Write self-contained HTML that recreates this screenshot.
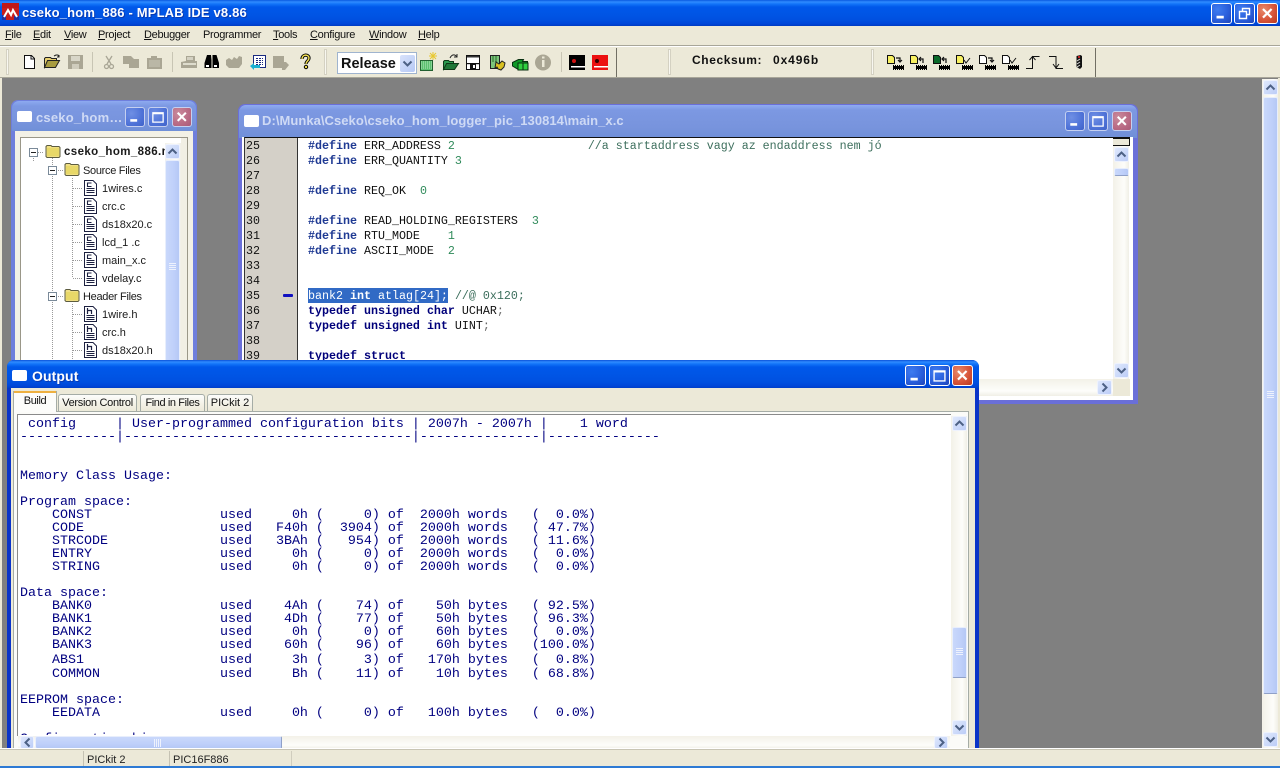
<!DOCTYPE html>
<html><head><meta charset="utf-8"><title>MPLAB IDE</title>
<style>
html,body{margin:0;padding:0;width:1280px;height:768px;overflow:hidden;background:#808080}
*{box-sizing:border-box}
div,span,pre,svg{position:absolute}
b,i,u,em{position:static}
pre span,pre b,pre i{position:static;font-style:normal}
body{font-family:"Liberation Sans",sans-serif;font-size:11px;color:#000}
.tbtn{border-radius:3px;border:1px solid #fff;width:21px;height:21px;background:radial-gradient(circle at 30% 30%,#3f7cf0 0,#2a5fdc 55%,#1f44b8 100%)}
.tbtn.x{background:radial-gradient(circle at 30% 30%,#e88a6c 0,#d8553a 55%,#b83a20 100%)}
.ib{border:1px solid #c5d0f0;background:radial-gradient(circle at 30% 30%,#6f8fe4 0,#4f73d8 60%,#3f62c8 100%);border-radius:3px;width:20px;height:20px}
.ib.x{background:radial-gradient(circle at 30% 30%,#c98a9c 0,#b96a84 60%,#a85a78 100%);}
.tit{color:#fff;font-weight:bold;white-space:nowrap}
.menu{top:29px;font-size:11px;letter-spacing:-.3px;white-space:nowrap;color:#111}
.menu u{text-decoration:underline}
.sb{width:15px;height:15px;background:linear-gradient(135deg,#dfe8fd,#bccdf7);border:1px solid #eef2fd;border-radius:2px}
.track{background:linear-gradient(90deg,#f3f1e8,#fdfdfa 70%,#f0efe6)}
.trackh{background:linear-gradient(180deg,#f3f1e8,#fdfdfa 70%,#f0efe6)}
.thumb{background:linear-gradient(90deg,#c9d8fb,#bfd0fa 60%,#b5c8f5);border:1px solid #e8eefc;border-bottom:1px solid #8fa0c8;border-radius:2px}
.thumbh{background:linear-gradient(180deg,#c9d8fb,#bfd0fa 60%,#b5c8f5);border:1px solid #e8eefc;border-right:1px solid #8fa0c8;border-radius:2px}
.tab{top:394px;height:17px;background:linear-gradient(#fdfdfb,#ece9d8);border:1px solid #a5aca6;border-bottom:0;border-radius:3px 3px 0 0;font-size:11px;text-align:center;line-height:16px;white-space:nowrap;color:#111}
.tr{font-size:11px;white-space:nowrap;color:#1a1a1a;line-height:13px}
pre{margin:0;font-family:"Liberation Mono",monospace}
.out{left:2px;font-size:13.33px;line-height:13px;color:#000080}
#ed{left:308px;top:139px;font-size:11.67px;line-height:15px;color:#111}
#ln{left:246px;top:139px;font-size:11.67px;line-height:15px;color:#111}
.d{color:#1f3a93;font-weight:bold}.n{color:#2f8a5a}.k{color:#00007a;font-weight:bold}.c{color:#3c6e5c}.p{color:#666}
.st{top:754px;font-size:11px;color:#222;white-space:nowrap}
</style></head><body>
<svg width="0" height="0" style="left:0;top:0">
<defs>
<symbol id="cu" viewBox="0 0 15 15"><path d="M3.5 9.5L7.5 5.5L11.5 9.5" fill="none" stroke="#4d6185" stroke-width="2"/></symbol>
<symbol id="cd" viewBox="0 0 15 15"><path d="M3.5 5.5L7.5 9.5L11.5 5.5" fill="none" stroke="#4d6185" stroke-width="2"/></symbol>
<symbol id="cl" viewBox="0 0 15 15"><path d="M9.5 3.5L5.5 7.5L9.5 11.5" fill="none" stroke="#4d6185" stroke-width="2"/></symbol>
<symbol id="cr" viewBox="0 0 15 15"><path d="M5.5 3.5L9.5 7.5L5.5 11.5" fill="none" stroke="#4d6185" stroke-width="2"/></symbol>
<symbol id="xx" viewBox="0 0 21 21"><path d="M5.5 5.5L15 15M15 5.5L5.5 15" stroke="#fff" stroke-width="2.4" fill="none"/></symbol>
<symbol id="mn" viewBox="0 0 21 21"><rect x="5" y="13" width="8" height="3" fill="#fff"/></symbol>
<symbol id="mx" viewBox="0 0 21 21"><path d="M4.5 5.5h12v11h-12zM4.5 6.5h12" fill="none" stroke="#fff" stroke-width="1.5"/></symbol>
<symbol id="fold" viewBox="0 0 16 15"><path d="M1 4.5V2.5l1-1h4l1 1h7l1 1v9l-1 1H2l-1-1z" fill="#f0df84" stroke="#5c5c40"/><rect x="2" y="4" width="12" height="8" fill="#e8d868"/></symbol>
<symbol id="fc" viewBox="0 0 15 16"><path d="M1.5.5H10L13.5 4V15.5H1.5z" fill="#fff" stroke="#1c2040"/><path d="M8.500 3H4.500V6.500H8.500" fill="none" stroke="#1c2040" stroke-width="1.100"/><path d="M3.500 8.500h8M3.500 10.500h8M3.500 12.500h8" stroke="#1c2040"/></symbol>
<symbol id="fh" viewBox="0 0 15 16"><path d="M1.5.5H10L13.5 4V15.5H1.5z" fill="#fff" stroke="#1c2040"/><path d="M4.500 2V8M4.500 4.500H8.500V8" fill="none" stroke="#1c2040" stroke-width="1.200"/><path d="M3.500 9.500h8M3.500 11.500h8M3.500 13.500h8" stroke="#1c2040"/></symbol>
<symbol id="chip" viewBox="0 0 11 5"><rect x="0" y="1" width="11" height="3" fill="#000"/><path d="M.5 0v5M2.5 0v5M4.5 0v5M6.5 0v5M8.5 0v5M10.5 0v5" stroke="#000" stroke-dasharray="1 3"/></symbol>
</defs></svg>

<!-- main title -->
<div style="left:0;top:0;width:1280px;height:26px;background:linear-gradient(#0a5ae0 0,#2f8bff 2px,#1274f8 4px,#0058ea 7px,#0055e5 14px,#0050e0 20px,#0046d8 24px,#003bc0 26px)"></div>
<svg style="left:2px;top:3px" width="17" height="17" viewBox="0 0 17 17"><rect width="17" height="6" fill="#c01818"/><rect y="5" width="17" height="12" fill="#c81c1c"/><rect y="12" width="4" height="5" fill="#2030a0"/><rect x="12" y="13" width="5" height="4" fill="#2030a0"/><path d="M2 14L6 7l3 5 2-5 4 7" fill="none" stroke="#fff" stroke-width="2"/></svg>
<div class="tit" style="left:22px;top:5px;font-size:13px;letter-spacing:.17px;text-shadow:1px 1px 0 #0a3ab0">cseko_hom_886 - MPLAB IDE v8.86</div>
<div class="tbtn" style="left:1211px;top:3px"><svg style="left:0;top:0" width="19" height="19"><use href="#mn"/></svg></div>
<div class="tbtn" style="left:1234px;top:3px"><svg style="left:0;top:0" width="19" height="19" viewBox="0 0 19 19"><path d="M7.5 7V4.5h7v6H12M4.5 7.5h7v7h-7z" fill="none" stroke="#fff" stroke-width="1.4"/></svg></div>
<div class="tbtn x" style="left:1257px;top:3px"><svg style="left:0;top:0" width="19" height="19"><use href="#xx"/></svg></div>

<!-- menu -->
<div style="left:0;top:26px;width:1280px;height:52px;background:#ece9d8"></div>
<div style="left:0;top:45px;width:1280px;height:1px;background:#a8a699"></div>
<div style="left:0;top:46px;width:1280px;height:1px;background:#fff"></div>
<div style="left:0;top:77px;width:1280px;height:1px;background:#a8a699"></div>
<span class="menu" style="left:5px"><u>F</u>ile</span>
<span class="menu" style="left:33px"><u>E</u>dit</span>
<span class="menu" style="left:64px"><u>V</u>iew</span>
<span class="menu" style="left:98px"><u>P</u>roject</span>
<span class="menu" style="left:144px"><u>D</u>ebugger</span>
<span class="menu" style="left:203px">Programmer</span>
<span class="menu" style="left:273px"><u>T</u>ools</span>
<span class="menu" style="left:310px"><u>C</u>onfigure</span>
<span class="menu" style="left:369px"><u>W</u>indow</span>
<span class="menu" style="left:418px"><u>H</u>elp</span>

<!-- toolbar icons -->
<svg style="left:0;top:46px" width="1280" height="32" viewBox="0 46 1280 32">
<g fill="#f8f7f0" stroke="#d4d1c2"><rect x="6.5" y="49.5" width="2" height="25"/><rect x="324.5" y="49.5" width="2" height="25"/><rect x="668.5" y="49.5" width="2" height="25"/><rect x="871.5" y="49.5" width="2" height="25"/></g>
<path d="M92.5 52v20M172.5 52v20M561.5 52v20" stroke="#c8c5b4"/>
<path d="M616.5 48v29M1095.5 48v29" stroke="#716f64"/>
<path d="M24.5 55.5h7l3 3v10h-10z" fill="#fff" stroke="#111"/><path d="M31 56v3h3" fill="none" stroke="#111"/>
<path d="M44.5 67.5v-9l1-1h5l1 1h5v2h-7l-5 7z" fill="#e8d070" stroke="#222"/><path d="M44.5 67.5l3-7h12l-4 7z" fill="#a89c40" stroke="#222"/><path d="M54 56l2-1h2l1 2M59 55v2h-2" fill="none" stroke="#222"/>
<g fill="#aaa694"><path d="M68 55h15v14H68z"/></g><rect x="71" y="56" width="9" height="5" fill="#d8d6c8"/><rect x="72" y="64" width="7" height="5" fill="#cfccbd"/>
<g fill="none" stroke="#a9a696" stroke-width="1.3"><path d="M106 56l5 8M112 56l-5 8"/><circle cx="106.5" cy="66.5" r="2"/><circle cx="111.5" cy="66.5" r="2"/></g>
<path d="M123 56h8l3 3h5v9h-10v-4h-6z" fill="#aaa694"/>
<path d="M147 58h4v-2h6v2h5v11h-15z" fill="#aaa694"/><rect x="149" y="60" width="11" height="7" fill="#bab7a6"/>
<path d="M186 56h9v5h2v7h-16v-6l5-1z" fill="#aaa694"/><rect x="183" y="63" width="13" height="2" fill="#dedccd"/><rect x="187" y="57" width="6" height="3" fill="#d4d1c2"/>
<path d="M207 55h4l.5 5v8h-7v-5zM212.500 55h4l2.500 8v5h-6.500v-8z" fill="#000"/><rect x="206" y="65" width="3" height="2" fill="#fff"/><rect x="214" y="65" width="3" height="2" fill="#fff"/>
<path d="M226 60l3-2 3 2 2-3 3 2 2-3 3 1v7l-3 4h-10l-3-3z" fill="#aaa694"/>
<rect x="253.500" y="55.500" width="12" height="12" fill="#fff" stroke="#1a2a80"/><path d="M256 58.500h7M256 60.500h7M256 62.500h7M256 64.500h7" stroke="#1a2a80" stroke-dasharray="2 1"/>
<path d="M250 66l4-3v2h6v3h-6v2z" fill="#1ab0d0"/>
<path d="M273 56h11v6h2l3 3-4 5h-3v-2h-9z" fill="#aaa694"/>
<path d="M302 59c0-5 7-5 7-1 0 3-3 3-3 6" fill="none" stroke="#000" stroke-width="3.2"/><path d="M302 59c0-5 7-5 7-1 0 3-3 3-3 6" fill="none" stroke="#f4e050" stroke-width="1.400"/><circle cx="306" cy="67" r="1.700" fill="#f4e050" stroke="#000"/>
<path d="M420.500 60.500h12v10h-12z" fill="#5cc070" stroke="#226030"/><path d="M421 62h11M421 64h11M421 66h11M421 68h11" stroke="#b8e8c0" stroke-dasharray="1 1"/>
<path d="M433 52v8M429 56h8M430 53l6 6M436 53l-6 6" stroke="#e8c830"/>
<path d="M443.500 69.500v-8l1-1h4l1 1h4v2h-5l-5 6z" fill="#2c9a50" stroke="#103818"/><path d="M443.500 69.500l3-6h12l-4 6z" fill="#207838" stroke="#103818"/><path d="M450 58c2-4 5-4 7-1M457 54v3h-3" fill="none" stroke="#222"/>
<path d="M466.500 55.500h13v14h-13z" fill="#fff" stroke="#111"/><rect x="467" y="56" width="12" height="1.500" fill="#333"/><rect x="466" y="63" width="14" height="1.200" fill="#111"/><rect x="470" y="64" width="6" height="5" fill="#111"/><rect x="473" y="65" width="2" height="3" fill="#fff"/>
<rect x="490.500" y="55.500" width="9" height="13" fill="#7cc67c" stroke="#222"/><path d="M492 57h6M492 59h6M492 61h6" stroke="#2a6a2a" stroke-dasharray="2 1"/><path d="M496 62l3 2 3-3 3 2-1 4-3 3-3-1-1-2-2 1z" fill="#d8c020" stroke="#222"/>
<path d="M512.500 62.500l6-3h5l-1 2h5v7.500h-10l-5-3z" fill="#109a28" stroke="#083010"/><rect x="518" y="63" width="10" height="7" fill="#30d040" stroke="#083010"/><path d="M523 63v7" stroke="#083010"/>
<circle cx="543" cy="62.500" r="8" fill="#aaa694"/><rect x="542" y="60" width="2.500" height="7" fill="#ece9d8"/><rect x="542" y="56.500" width="2.500" height="2" fill="#ece9d8"/>
<rect x="569" y="55" width="16" height="15" fill="#000"/><circle cx="574" cy="61" r="2" fill="#d01010"/><rect x="571" y="66" width="14" height="1.500" fill="#fff"/>
<rect x="592" y="55" width="16" height="15" fill="#ec1010"/><circle cx="597" cy="61" r="2" fill="#300"/><rect x="594" y="66" width="14" height="1.500" fill="#fff"/>

<g id="rg">
<path d="M887.500 55.500h5l2 2v6h-7z" fill="#f8f060" stroke="#111"/><path d="M896 58h4v3M898 60l2 2 2-2" fill="none" stroke="#111" stroke-width="1.200"/><use href="#chip" x="893" y="65" width="11" height="5"/>
<path d="M910.500 55.500h5l2 2v6h-7z" fill="#f8f060" stroke="#111"/><path d="M923 63v-4h-4M921 57l-2 2 2 2" fill="none" stroke="#111" stroke-width="1.200"/><use href="#chip" x="916" y="65" width="11" height="5"/>
<path d="M933.500 55.500h5l2 2v6h-7z" fill="#0a6a2a" stroke="#111"/><path d="M946 63v-4h-4M944 57l-2 2 2 2" fill="none" stroke="#111" stroke-width="1.200"/><use href="#chip" x="939" y="65" width="11" height="5"/>
<path d="M956.500 55.500h5l2 2v6h-7z" fill="#f8f060" stroke="#111"/><path d="M964 60l2 3 4-5" fill="none" stroke="#111"/><use href="#chip" x="962" y="65" width="11" height="5"/>
<path d="M979.500 55.500h5l2 2v6h-7z" fill="#fff" stroke="#111"/><path d="M988 58h4v3M990 60l2 2 2-2" fill="none" stroke="#111" stroke-width="1.200"/><use href="#chip" x="985" y="65" width="11" height="5"/>
<path d="M1002.500 55.500h5l2 2v6h-7z" fill="#fff" stroke="#111"/><path d="M1010 60l2 3 4-5" fill="none" stroke="#111"/><use href="#chip" x="1008" y="65" width="11" height="5"/>
<path d="M1026 68.500h6.500v-12h7M1032.500 64V57M1029.500 60l3-3.500 3 3.500" fill="none" stroke="#111"/>
<path d="M1049 56.500h7v12h7M1056 60v8M1053 64l3 4 3-4" fill="none" stroke="#111"/>
<path d="M1076.500 56l4-1 1.500 1v11l-2 2-3.500-2z" fill="#111"/><path d="M1078 57h2" stroke="#c02020" stroke-width="2"/><path d="M1077 61l3-2M1077 64l3-2M1077 67l3-2" stroke="#ddd"/>
</g>
</svg>
<!-- combo -->
<div style="left:337px;top:52px;width:80px;height:22px;background:#fff;border:1px solid #9fb4cf"></div>
<div style="left:341px;top:56px;font-size:14.5px;font-weight:bold;white-space:nowrap;color:#111">Release</div>
<div style="left:400px;top:55px;width:15px;height:17px;background:linear-gradient(135deg,#d8e2fb,#b6c9f5);border-radius:2px"><svg style="left:0;top:1px" width="15" height="15"><use href="#cd"/></svg></div>
<div style="left:692px;top:53px;font-size:12px;font-weight:bold;letter-spacing:.6px;white-space:nowrap;color:#111">Checksum:</div>
<div style="left:773px;top:53px;font-size:12px;font-weight:bold;letter-spacing:.9px;white-space:nowrap;color:#111">0x496b</div>

<!-- MDI bg -->
<div style="left:0;top:78px;width:2px;height:671px;background:#ece9d8"></div>
<div style="left:1278px;top:78px;width:2px;height:671px;background:#ece9d8"></div>
<div class="track" style="left:1262px;top:79px;width:16px;height:670px"></div>
<div class="sb" style="left:1263px;top:80px"><svg style="left:-1px;top:-1px" width="15" height="15"><use href="#cu"/></svg></div>
<div class="thumb" style="left:1263px;top:97px;width:15px;height:597px"></div>
<div class="sb" style="left:1263px;top:732px"><svg style="left:-1px;top:-1px" width="15" height="15"><use href="#cd"/></svg></div>
<svg style="left:1266px;top:391px" width="9" height="8"><path d="M1 .5h7M1 2.500h7M1 4.500h7M1 6.500h7" stroke="#eef2fd"/></svg>

<!-- Project window -->
<div style="left:11px;top:100px;width:186px;height:270px;background:#6f7fdc;border-radius:7px 7px 0 0"></div>
<div style="left:12px;top:101px;width:184px;height:30px;background:linear-gradient(#8daaf0 0,#7c98e2 5px,#7894dd 20px,#7090d8 100%);border-radius:7px 7px 0 0"></div>
<div style="left:15px;top:131px;width:178px;height:240px;background:#f3f1e6"></div>
<div style="left:17px;top:111px;width:15px;height:11px;background:#fff;border-top:2px solid #fff;border-radius:2px"></div>
<div class="tit" style="left:36px;top:110px;font-size:13px;color:#cfdaf5;letter-spacing:.2px">cseko_hom…</div>
<div class="ib" style="left:125px;top:107px"><svg style="left:0;top:0" width="18" height="18"><use href="#mn"/></svg></div>
<div class="ib" style="left:148px;top:107px"><svg style="left:0;top:0" width="18" height="18"><use href="#mx"/></svg></div>
<div class="ib x" style="left:172px;top:107px"><svg style="left:0;top:0" width="18" height="18"><use href="#xx"/></svg></div>
<div style="left:20px;top:137px;width:168px;height:230px;background:#fff;border:1px solid #9a9788"></div>
<div style="left:181px;top:138px;width:6px;height:230px;background:#f1efe4"></div>
<svg style="left:0;top:130px" width="170" height="235" viewBox="0 130 170 235">
<path d="M33.500 158v3M52.500 158v205M72.500 178v100M72.500 304v60M38 152.500h6M56 170.500h7M56 296.500h7M73 188.500h9M73 206.500h9M73 224.500h9M73 242.500h9M73 260.500h9M73 278.500h9M73 314.500h9M73 332.500h9M73 350.500h9" stroke="#9a9a9a" stroke-dasharray="1 1" fill="none"/>
<g fill="#fff" stroke="#7a8a99"><rect x="29.500" y="148.500" width="8" height="8"/><rect x="48.500" y="166.500" width="8" height="8"/><rect x="48.500" y="292.500" width="8" height="8"/></g>
<path d="M31 152.500h5M50 170.500h5M50 296.500h5" stroke="#222"/>
<use href="#fold" x="45" y="144" width="16" height="15"/>
<use href="#fold" x="64" y="162" width="16" height="15"/>
<use href="#fold" x="64" y="288" width="16" height="15"/>
<use href="#fc" x="83" y="180" width="15" height="16"/>
<use href="#fc" x="83" y="198" width="15" height="16"/>
<use href="#fc" x="83" y="216" width="15" height="16"/>
<use href="#fc" x="83" y="234" width="15" height="16"/>
<use href="#fc" x="83" y="252" width="15" height="16"/>
<use href="#fc" x="83" y="270" width="15" height="16"/>
<use href="#fh" x="83" y="306" width="15" height="16"/>
<use href="#fh" x="83" y="324" width="15" height="16"/>
<use href="#fh" x="83" y="342" width="15" height="16"/>
</svg>
<div style="left:64px;top:146px;width:101px;height:14px;overflow:hidden"><span class="tr" style="left:0;top:0;font-weight:bold;font-size:11.5px;letter-spacing:.4px">cseko_hom_886.mcp</span></div>
<span class="tr" style="left:83px;top:165px;letter-spacing:-.3px">Source Files</span>
<span class="tr" style="left:102px;top:183px">1wires.c</span>
<span class="tr" style="left:102px;top:201px">crc.c</span>
<span class="tr" style="left:102px;top:219px">ds18x20.c</span>
<span class="tr" style="left:102px;top:237px">lcd_1 .c</span>
<span class="tr" style="left:102px;top:255px">main_x.c</span>
<span class="tr" style="left:102px;top:273px">vdelay.c</span>
<span class="tr" style="left:83px;top:291px;letter-spacing:-.3px">Header Files</span>
<span class="tr" style="left:102px;top:309px">1wire.h</span>
<span class="tr" style="left:102px;top:327px">crc.h</span>
<span class="tr" style="left:102px;top:345px">ds18x20.h</span>
<div class="track" style="left:165px;top:143px;width:16px;height:225px"></div>
<div class="sb" style="left:165px;top:144px"><svg style="left:-1px;top:-1px" width="15" height="15"><use href="#cu"/></svg></div>
<div class="thumb" style="left:165px;top:160px;width:15px;height:210px"></div>
<svg style="left:168px;top:263px" width="9" height="8"><path d="M1 .5h7M1 2.500h7M1 4.500h7M1 6.500h7" stroke="#eef2fd"/></svg>

<!-- Editor window -->
<div style="left:238px;top:104px;width:900px;height:300px;background:#6a6fd8;border-radius:7px 7px 0 0"></div>
<div style="left:239px;top:105px;width:898px;height:33px;background:linear-gradient(#8fabf2 0,#7c98e2 5px,#7894dd 22px,#6f8fd8 100%);border-radius:7px 7px 0 0"></div>
<div style="left:242px;top:137px;width:891px;height:263px;background:#fff"></div>
<div style="left:244px;top:115px;width:15px;height:12px;background:#fff;border-radius:2px"></div>
<div class="tit" style="left:262px;top:113px;font-size:13px;color:#cfdaf5;letter-spacing:.05px">D:\Munka\Cseko\cseko_hom_logger_pic_130814\main_x.c</div>
<div class="ib" style="left:1065px;top:111px"><svg style="left:0;top:0" width="18" height="18"><use href="#mn"/></svg></div>
<div class="ib" style="left:1088px;top:111px"><svg style="left:0;top:0" width="18" height="18"><use href="#mx"/></svg></div>
<div class="ib x" style="left:1112px;top:111px"><svg style="left:0;top:0" width="18" height="18"><use href="#xx"/></svg></div>
<div style="left:244px;top:137px;width:886px;height:1px;background:#111"></div>
<div style="left:244px;top:137px;width:1px;height:242px;background:#333"></div>
<div style="left:245px;top:138px;width:52px;height:242px;background:#d4d0c8"></div>
<div style="left:297px;top:138px;width:1px;height:242px;background:#333"></div>
<pre id="ln">25
26
27
28
29
30
31
32
33
34
35
36
37
38
39</pre>
<div style="left:283px;top:294px;width:10px;height:3px;background:#1010c0;border-radius:1px"></div>
<div style="left:308px;top:288px;width:140px;height:15px;background:#316ac5"></div>
<pre id="ed"><span class="d">#define</span> ERR_ADDRESS <span class="n">2</span>                   <span class="c">//a startaddress vagy az endaddress nem jó</span>
<span class="d">#define</span> ERR_QUANTITY <span class="n">3</span>

<span class="d">#define</span> REQ_OK  <span class="n">0</span>

<span class="d">#define</span> READ_HOLDING_REGISTERS  <span class="n">3</span>
<span class="d">#define</span> RTU_MODE    <span class="n">1</span>
<span class="d">#define</span> ASCII_MODE  <span class="n">2</span>


<span style="color:#fff">bank2 <b>int</b> atlag[24];</span> <span class="c">//@ 0x120;</span>
<span class="k">typedef</span> <span class="k">unsigned</span> <span class="k">char</span> UCHAR<span class="p">;</span>
<span class="k">typedef</span> <span class="k">unsigned</span> <span class="k">int</span> UINT<span class="p">;</span>

<span class="k">typedef</span> <span class="k">struct</span></pre>
<div style="left:1113px;top:138px;width:16px;height:242px;background:linear-gradient(90deg,#f3f1e8,#fdfdfa 70%,#f0efe6)"></div>
<div style="left:1113px;top:138px;width:17px;height:8px;background:#ece9d8;border:1px solid #111;border-left:0"></div>
<div class="sb" style="left:1114px;top:147px"><svg style="left:-1px;top:-1px" width="15" height="15"><use href="#cu"/></svg></div>
<div class="thumb" style="left:1114px;top:168px;width:15px;height:8px"></div>
<div class="sb" style="left:1114px;top:363px"><svg style="left:-1px;top:-1px" width="15" height="15"><use href="#cd"/></svg></div>
<div class="trackh" style="left:298px;top:379px;width:815px;height:17px"></div>
<div style="left:1113px;top:379px;width:17px;height:17px;background:#ece9d8"></div>
<div class="sb" style="left:1097px;top:380px"><svg style="left:-1px;top:-1px" width="15" height="15"><use href="#cr"/></svg></div>

<!-- Output window -->
<div style="left:7px;top:360px;width:972px;height:389px;background:#0a34c8;border-radius:7px 7px 0 0"></div>
<div style="left:7px;top:360px;width:972px;height:29px;background:linear-gradient(#0a50d8 0,#2f8bff 2px,#1274f8 4px,#0058ea 7px,#0055e5 15px,#0050e0 22px,#0046d8 26px,#003bc0 29px);border-radius:7px 7px 0 0"></div>
<div style="left:11px;top:388px;width:964px;height:361px;background:#ece9d8"></div>
<div style="left:12px;top:370px;width:15px;height:11px;background:#fff;border-radius:2px"></div>
<div class="tit" style="left:32px;top:368px;font-size:14px;letter-spacing:.1px;text-shadow:1px 1px 0 #0a3ab0">Output</div>
<div class="tbtn" style="left:905px;top:365px"><svg style="left:0;top:0" width="19" height="19"><use href="#mn"/></svg></div>
<div class="tbtn" style="left:929px;top:365px"><svg style="left:0;top:0" width="19" height="19"><use href="#mx"/></svg></div>
<div class="tbtn x" style="left:952px;top:365px"><svg style="left:0;top:0" width="19" height="19"><use href="#xx"/></svg></div>
<div style="left:13px;top:411px;width:956px;height:338px;background:#fbfbf8;border:1px solid #a5aca6;border-bottom:0"></div>
<div class="tab" style="left:58px;width:79px;letter-spacing:-.3px">Version Control</div>
<div class="tab" style="left:140px;width:65px;letter-spacing:-.4px">Find in Files</div>
<div class="tab" style="left:207px;width:46px">PICkit 2</div>
<div style="left:13px;top:391px;width:44px;height:21px;background:#fcfcfa;border:1px solid #a5aca6;border-top:0;border-bottom:0;text-align:center;font-size:11px;letter-spacing:-.4px;line-height:21px;color:#111"><div style="left:0;top:0;width:42px;height:2px;background:#eeb040"></div>Build</div>
<div style="left:17px;top:414px;width:934px;height:322px;background:#fff;border-top:1px solid #8a8a8a;border-left:1px solid #8a8a8a"></div>
<div style="left:18px;top:416px;width:932px;height:319px;overflow:hidden">
<pre class="out" style="top:2px"> config     | User-programmed configuration bits | 2007h - 2007h |    1 word
------------|------------------------------------|---------------|--------------


Memory Class Usage:

Program space:
    CONST                used     0h (     0) of  2000h words   (  0.0%)
    CODE                 used   F40h (  3904) of  2000h words   ( 47.7%)
    STRCODE              used   3BAh (   954) of  2000h words   ( 11.6%)
    ENTRY                used     0h (     0) of  2000h words   (  0.0%)
    STRING               used     0h (     0) of  2000h words   (  0.0%)

Data space:
    BANK0                used    4Ah (    74) of    50h bytes   ( 92.5%)
    BANK1                used    4Dh (    77) of    50h bytes   ( 96.3%)
    BANK2                used     0h (     0) of    60h bytes   (  0.0%)
    BANK3                used    60h (    96) of    60h bytes   (100.0%)</pre>
<pre class="out" style="top:238px">    ABS1                 used     3h (     3) of   170h bytes   (  0.8%)</pre>
<pre class="out" style="top:252px">    COMMON               used     Bh (    11) of    10h bytes   ( 68.8%)

EEPROM space:
    EEDATA               used     0h (     0) of   100h bytes   (  0.0%)

Configuration bi</pre>
</div>
<div class="track" style="left:951px;top:416px;width:16px;height:320px"></div>
<div class="sb" style="left:952px;top:416px"><svg style="left:-1px;top:-1px" width="15" height="15"><use href="#cu"/></svg></div>
<div class="thumb" style="left:952px;top:627px;width:15px;height:51px"></div>
<svg style="left:955px;top:648px" width="9" height="8"><path d="M1 .5h7M1 2.500h7M1 4.500h7M1 6.500h7" stroke="#eef2fd"/></svg>
<div class="sb" style="left:952px;top:720px"><svg style="left:-1px;top:-1px" width="15" height="15"><use href="#cd"/></svg></div>
<div class="trackh" style="left:18px;top:736px;width:932px;height:13px"></div>
<div class="sb" style="left:20px;top:736px;width:14px;height:13px"><svg style="left:-1px;top:-2px" width="15" height="15"><use href="#cl"/></svg></div>
<div class="thumbh" style="left:35px;top:736px;width:247px;height:13px"></div>
<svg style="left:154px;top:739px" width="9" height="8"><path d="M.5 0v8M2.500 0v8M4.500 0v8M6.500 0v8" stroke="#eef2fd"/></svg>
<div class="sb" style="left:934px;top:736px;width:14px;height:13px"><svg style="left:-1px;top:-2px" width="15" height="15"><use href="#cr"/></svg></div>

<!-- status bar -->
<div style="left:0;top:748px;width:1280px;height:18px;background:#ece9d8;border-top:1px solid #fff"></div>
<div style="left:0;top:749px;width:1280px;height:1px;background:#c8c5b4"></div>
<div style="left:83px;top:751px;width:1px;height:15px;background:#c5c2b3"></div>
<div style="left:169px;top:751px;width:1px;height:15px;background:#c5c2b3"></div>
<div style="left:291px;top:751px;width:1px;height:15px;background:#d0cdbe"></div>
<span class="st" style="left:87px">PICkit 2</span>
<span class="st" style="left:173px">PIC16F886</span>
<div style="left:0;top:766px;width:1280px;height:2px;background:#2d7ad4"></div>
</body></html>
